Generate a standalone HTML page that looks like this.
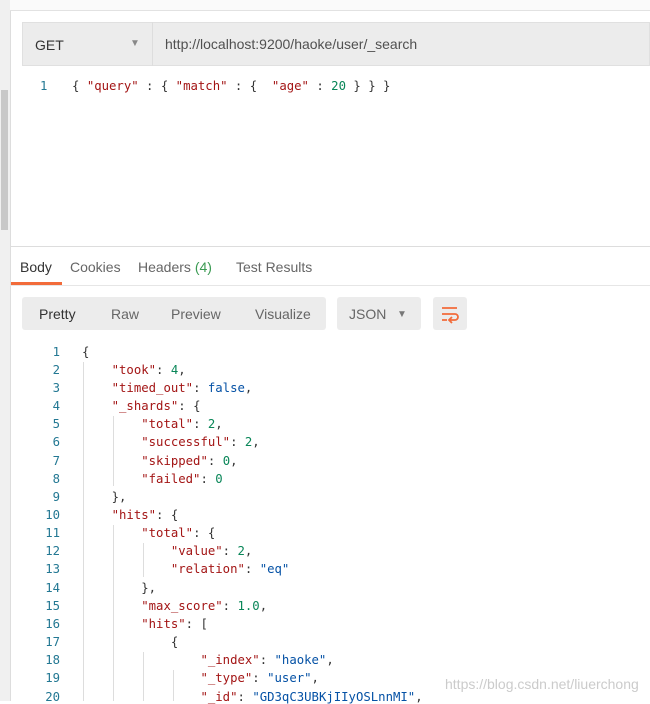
<!DOCTYPE html>
<html><head><meta charset="utf-8"><style>
body{margin:0;width:650px;height:701px;background:#fff;position:relative;overflow:hidden;font-family:"Liberation Sans",sans-serif}
.abs{position:absolute}
.mono{font-family:"DejaVu Sans Mono","Liberation Mono",monospace;font-size:12.3px;white-space:pre}
.k{color:#a31515}.s{color:#0451a5}.n{color:#098658}.b{color:#0451a5}
.ln{position:absolute;left:20px;width:40px;text-align:right;color:#237893}
.cd{position:absolute;left:82px;color:#333}
.g{position:absolute;width:1px;background:#ddd}
</style></head><body>
<div class="abs" style="left:0;top:0;width:10px;height:701px;background:#f0f0f0;border-right:1px solid #ddd"></div>
<div class="abs" style="left:1px;top:90px;width:7px;height:140px;background:#c8c8c8"></div>
<div class="abs" style="left:10px;top:0;width:640px;height:10px;background:#fafafa;border-bottom:1px solid #e2e2e2"></div>
<div class="abs" style="left:22px;top:22px;width:628px;height:44px;background:#ececec;border:1px solid #e0e0e0;box-sizing:border-box"></div>
<div class="abs" style="left:152px;top:22px;width:1px;height:44px;background:#ddd"></div>
<div class="abs" style="left:35px;top:37px;font-size:14px;color:#333">GET</div>
<div class="abs" style="left:130px;top:38px;font-size:10px;color:#888">▼</div>
<div class="abs" style="left:165px;top:36px;font-size:14px;color:#505050">http://localhost:9200/haoke/user/_search</div>
<div class="abs mono" style="left:40px;top:79px;color:#237893">1</div>
<div class="abs mono" style="left:72px;top:79px;color:#333">{ <span class="k">"query"</span> : { <span class="k">"match"</span> : {  <span class="k">"age"</span> : <span class="n">20</span> } } }</div>
<div class="abs" style="left:10px;top:246px;width:640px;height:1px;background:#ddd"></div>
<div class="abs" style="left:20px;top:259px;font-size:14px;color:#333">Body</div>
<div class="abs" style="left:70px;top:259px;font-size:14px;color:#666">Cookies</div>
<div class="abs" style="left:138px;top:259px;font-size:14px;color:#666">Headers <span style="color:#3a9a52">(4)</span></div>
<div class="abs" style="left:236px;top:259px;font-size:14px;color:#666">Test Results</div>
<div class="abs" style="left:11px;top:282px;width:51px;height:3px;background:#f26b3a"></div>
<div class="abs" style="left:10px;top:285px;width:640px;height:1px;background:#e6e6e6"></div>
<div class="abs" style="left:22px;top:297px;width:304px;height:33px;background:#ececec;border-radius:3px"></div>
<div class="abs" style="left:39px;top:306px;font-size:14px;color:#333">Pretty</div>
<div class="abs" style="left:111px;top:306px;font-size:14px;color:#666">Raw</div>
<div class="abs" style="left:171px;top:306px;font-size:14px;color:#666">Preview</div>
<div class="abs" style="left:255px;top:306px;font-size:14px;color:#666">Visualize</div>
<div class="abs" style="left:337px;top:297px;width:84px;height:33px;background:#ececec;border-radius:3px"></div>
<div class="abs" style="left:349px;top:306px;font-size:14px;color:#666">JSON</div>
<div class="abs" style="left:397px;top:309px;font-size:10px;color:#777">▼</div>
<div class="abs" style="left:433px;top:297px;width:34px;height:33px;background:#ececec;border-radius:3px"></div>
<svg class="abs" style="left:440px;top:304px" width="20" height="20" viewBox="0 0 20 20" fill="none" stroke="#f26b3a" stroke-width="1.8"><path d="M2 4h15M2 10h13a3 3 0 0 1 0 6h-5M12 13l-3 3 3 3M2 16h5"/></svg>
<div class="g" style="left:83px;top:362px;height:339px"></div>
<div class="g" style="left:113px;top:416px;height:70px"></div>
<div class="g" style="left:113px;top:525px;height:176px"></div>
<div class="g" style="left:143px;top:543px;height:34px"></div>
<div class="g" style="left:143px;top:652px;height:49px"></div>
<div class="g" style="left:173px;top:670px;height:31px"></div>
<div class="mono">
<div class="ln" style="top:345px">1</div><div class="cd" style="top:345px">{</div>
<div class="ln" style="top:363px">2</div><div class="cd" style="top:363px">    <span class="k">"took"</span>: <span class="n">4</span>,</div>
<div class="ln" style="top:381px">3</div><div class="cd" style="top:381px">    <span class="k">"timed_out"</span>: <span class="b">false</span>,</div>
<div class="ln" style="top:399px">4</div><div class="cd" style="top:399px">    <span class="k">"_shards"</span>: {</div>
<div class="ln" style="top:417px">5</div><div class="cd" style="top:417px">        <span class="k">"total"</span>: <span class="n">2</span>,</div>
<div class="ln" style="top:435px">6</div><div class="cd" style="top:435px">        <span class="k">"successful"</span>: <span class="n">2</span>,</div>
<div class="ln" style="top:454px">7</div><div class="cd" style="top:454px">        <span class="k">"skipped"</span>: <span class="n">0</span>,</div>
<div class="ln" style="top:472px">8</div><div class="cd" style="top:472px">        <span class="k">"failed"</span>: <span class="n">0</span></div>
<div class="ln" style="top:490px">9</div><div class="cd" style="top:490px">    },</div>
<div class="ln" style="top:508px">10</div><div class="cd" style="top:508px">    <span class="k">"hits"</span>: {</div>
<div class="ln" style="top:526px">11</div><div class="cd" style="top:526px">        <span class="k">"total"</span>: {</div>
<div class="ln" style="top:544px">12</div><div class="cd" style="top:544px">            <span class="k">"value"</span>: <span class="n">2</span>,</div>
<div class="ln" style="top:562px">13</div><div class="cd" style="top:562px">            <span class="k">"relation"</span>: <span class="s">"eq"</span></div>
<div class="ln" style="top:581px">14</div><div class="cd" style="top:581px">        },</div>
<div class="ln" style="top:599px">15</div><div class="cd" style="top:599px">        <span class="k">"max_score"</span>: <span class="n">1.0</span>,</div>
<div class="ln" style="top:617px">16</div><div class="cd" style="top:617px">        <span class="k">"hits"</span>: [</div>
<div class="ln" style="top:635px">17</div><div class="cd" style="top:635px">            {</div>
<div class="ln" style="top:653px">18</div><div class="cd" style="top:653px">                <span class="k">"_index"</span>: <span class="s">"haoke"</span>,</div>
<div class="ln" style="top:671px">19</div><div class="cd" style="top:671px">                <span class="k">"_type"</span>: <span class="s">"user"</span>,</div>
<div class="ln" style="top:690px">20</div><div class="cd" style="top:690px">                <span class="k">"_id"</span>: <span class="s">"GD3qC3UBKjIIyOSLnnMI"</span>,</div>
</div>
<div class="abs" style="left:445px;top:676px;font-size:14px;color:rgba(190,190,190,.8)">https://blog.csdn.net/liuerchong</div>
</body></html>
